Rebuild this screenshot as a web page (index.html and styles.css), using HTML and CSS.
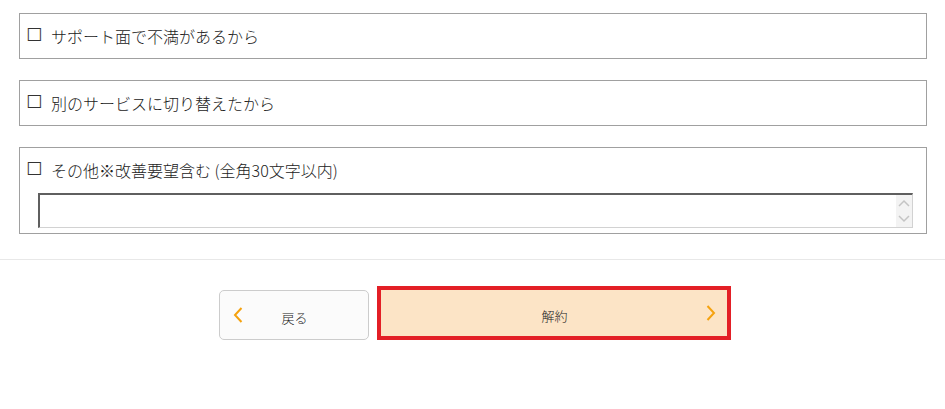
FILE: index.html
```html
<!DOCTYPE html>
<html lang="ja">
<head>
<meta charset="utf-8">
<title>解約理由</title>
<link rel="stylesheet" href="styles.css">
</head>
<body>
<main class="page">
  <section class="reasons">
    <label class="reason">
      <span class="check">☐</span>
      <span class="reason-text">サポート面で不満があるから</span>
    </label>
    <label class="reason">
      <span class="check">☐</span>
      <span class="reason-text">別のサービスに切り替えたから</span>
    </label>
    <div class="reason reason-other">
      <label class="other-label">
        <span class="check">☐</span>
        <span class="reason-text">その他※改善要望含む (全角30文字以内)</span>
      </label>
      <div class="textbox">
        <textarea class="textbox-input" rows="1"></textarea>
        <div class="spin">
          <svg width="12" height="8" viewBox="0 0 12 8"><polyline points="1,7 6,2 11,7" fill="none" stroke="#c4c4c4" stroke-width="1.5"/></svg>
          <svg width="12" height="8" viewBox="0 0 12 8"><polyline points="1,1 6,6 11,1" fill="none" stroke="#c4c4c4" stroke-width="1.5"/></svg>
        </div>
      </div>
    </div>
  </section>
  <hr class="divider">
  <nav class="actions">
    <button class="btn btn-back" type="button">
      <svg class="chev" width="10" height="16" viewBox="0 0 10 16"><polyline points="8.5,1 2,8 8.5,15" fill="none" stroke="#f5a20f" stroke-width="2"/></svg>
      <span class="btn-label">戻る</span>
      <span class="spacer"></span>
    </button>
    <button class="btn btn-next" type="button">
      <span class="spacer"></span>
      <span class="btn-label">解約</span>
      <svg class="chev chev-right" width="10" height="16" viewBox="0 0 10 16"><polyline points="1.5,1 8,8 1.5,15" fill="none" stroke="#f5a20f" stroke-width="2"/></svg>
    </button>
  </nav>
</main>
</body>
</html>
```

FILE: styles.css
```css
html, body {
  margin: 0;
  padding: 0;
  background: #ffffff;
}

body {
  font-family: "Noto Sans CJK JP", "Noto Sans", sans-serif;
  color: #333333;
}

.page {
  width: 945px;
}

.reasons {
  display: flex;
  flex-direction: column;
  gap: 21px;
  padding: 13px 18px 0 19px;
}

.reason {
  display: flex;
  align-items: center;
  box-sizing: border-box;
  height: 46px;
  border: 1px solid #a0a0a0;
  padding: 0 6px;
  background: #ffffff;
}

.reason-other {
  flex-direction: column;
  align-items: stretch;
  height: 87px;
  padding: 10px 13px 5px 0;
}

.other-label {
  display: flex;
  align-items: center;
  height: 24px;
  padding-left: 6px;
}

.check {
  display: inline-block;
  width: 15px;
  font-family: "DejaVu Sans", sans-serif;
  font-size: 18px;
  line-height: 24px;
  color: #333333;
  margin-right: 10px;
  position: relative;
  top: -1px;
}

.reason-text {
  font-size: 16px;
  font-weight: 300;
  line-height: 24px;
  color: #222222;
  white-space: nowrap;
}

.textbox {
  display: flex;
  box-sizing: border-box;
  height: 35px;
  margin: 11px 0 0 18px;
  border-style: solid;
  border-width: 2px 1px 1px 2px;
  border-color: #5f5f5f #d2d2d2 #d2d2d2 #5f5f5f;
  background: #ffffff;
}

.textbox-input {
  flex: 1;
  border: none;
  outline: none;
  resize: none;
  padding: 2px 4px;
  font-family: "Noto Sans CJK JP", sans-serif;
  font-size: 14px;
  background: transparent;
}

.spin {
  width: 16px;
  display: flex;
  flex-direction: column;
  align-items: center;
  justify-content: center;
  gap: 8px;
  background: #f3f3f3;
}

.divider {
  margin: 25px 0 0;
  border: none;
  border-top: 1px solid #e8e8e8;
  height: 0;
}

.actions {
  display: flex;
  justify-content: center;
  gap: 12px;
  padding: 30px 0 0 1px;
}

.btn {
  display: grid;
  grid-template-columns: 1fr auto 1fr;
  align-items: center;
  box-sizing: border-box;
  height: 50px;
  font-family: "Noto Sans CJK JP", sans-serif;
  font-size: 13px;
  font-weight: 300;
  color: #222222;
  cursor: pointer;
}

.btn-label {
  padding-top: 4px;
}

.btn-back {
  width: 150px;
  padding: 0 12px 0 13px;
  background: #fbfbfb;
  border: 1px solid #cccccc;
  border-radius: 5px;
}

.btn-next {
  width: 346px;
  height: 46px;
  padding: 0 11px 0 12px;
  background: #fce4c6;
  border: none;
  border-radius: 0;
  outline: 4px solid #e31f26;
  outline-offset: 0;
}

.chev {
  display: block;
}

.chev-right {
  justify-self: end;
}

.spacer {
  display: block;
}
```
